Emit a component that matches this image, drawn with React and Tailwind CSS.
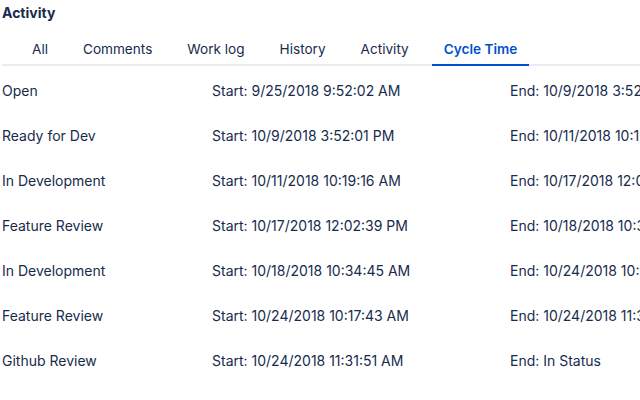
import React from "react";

const rows = [
  ["Open", "Start: 9/25/2018 9:52:02 AM", "End: 10/9/2018 3:52:01 PM"],
  ["Ready for Dev", "Start: 10/9/2018 3:52:01 PM", "End: 10/11/2018 10:19:16 AM"],
  ["In Development", "Start: 10/11/2018 10:19:16 AM", "End: 10/17/2018 12:02:39 PM"],
  ["Feature Review", "Start: 10/17/2018 12:02:39 PM", "End: 10/18/2018 10:34:45 AM"],
  ["In Development", "Start: 10/18/2018 10:34:45 AM", "End: 10/24/2018 10:17:43 AM"],
  ["Feature Review", "Start: 10/24/2018 10:17:43 AM", "End: 10/24/2018 11:31:51 AM"],
  ["Github Review", "Start: 10/24/2018 11:31:51 AM", "End: In Status"],
];

const tabs = ["All", "Comments", "Work log", "History", "Activity", "Cycle Time"];

export default function App() {
  return (
    <div
      className="w-[640px] h-[400px] overflow-hidden bg-white text-[#172b4d]"
      style={{ fontFamily: 'Inter, "Liberation Sans", Arial, sans-serif' }}
    >
      <div className="pl-[2px] pt-[4px] h-[32px] text-[14px] font-bold leading-[18px]">Activity</div>
      <div className="flex pl-[18px] gap-[11px] border-b-2 border-[#ebecf0] ml-[2px] h-[34px]">
        {tabs.map((t) => {
          const active = t === "Cycle Time";
          return (
            <div
              key={t}
              className={
                "px-[12px] pt-[7px] text-[13.6px] leading-[20px] whitespace-nowrap " +
                (active
                  ? "text-[#0052cc] font-semibold border-b-2 border-[#0052cc] -mb-[2px]"
                  : "text-[#172b4d]")
              }
            >
              {t}
            </div>
          );
        })}
      </div>
      <div className="flex flex-col pt-[15px]">
        {rows.map((r, i) => (
          <div key={i} className="flex h-[45px] pl-[2px] text-[14px] leading-[20px] whitespace-nowrap">
            <div className="w-[210px] shrink-0">{r[0]}</div>
            <div className="w-[298px] shrink-0">{r[1]}</div>
            <div className="shrink-0">{r[2]}</div>
          </div>
        ))}
      </div>
    </div>
  );
}
